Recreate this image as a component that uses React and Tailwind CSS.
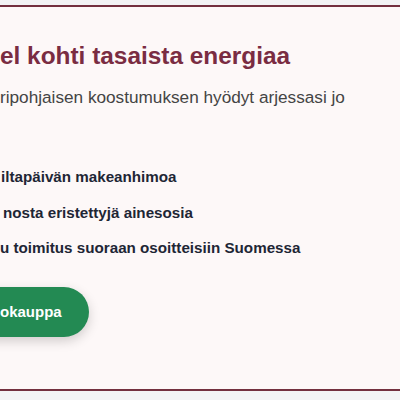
const perks = [
  { text: "iltapäivän makeanhimoa", indent: "pl-[1px]" },
  { text: "nosta eristettyjä ainesosia", indent: "pl-[3px]" },
  { text: "u toimitus suoraan osoitteisiin Suomessa", indent: "pl-0" },
];

export default function App() {
  return (
    <div className="h-[400px] w-[400px] overflow-hidden bg-[#f3f3f5] pt-[5px] font-['Liberation_Sans',Arial,sans-serif]">
      <section className="h-[386px] border-y-2 border-[#74303f] bg-[#fdf8f8]">
        <div className="pt-[33px]">
          <h2 className="text-[24.4px] font-bold leading-[32px] text-[#7a2c42]">
            el kohti tasaista energiaa
          </h2>
          <p className="mt-[12px] text-[17.2px] leading-[26px] text-[#444444]">
            ripohjaisen koostumuksen hyödyt arjessasi jo
          </p>
          <ul className="mt-[55px] flex flex-col gap-[11.5px]">
            {perks.map((p) => (
              <li
                key={p.text}
                className={`text-[15.2px] font-bold leading-[24px] text-[#1e2635] ${p.indent}`}
              >
                {p.text}
              </li>
            ))}
          </ul>
          <button className="-ml-[40px] mt-[27px] flex h-[50px] items-center rounded-full bg-[#238a53] pl-[40px] pr-[27px] text-[15px] font-bold text-white shadow-[0_4px_12px_rgba(0,0,0,0.18)]">
            okauppa
          </button>
        </div>
      </section>
    </div>
  );
}
